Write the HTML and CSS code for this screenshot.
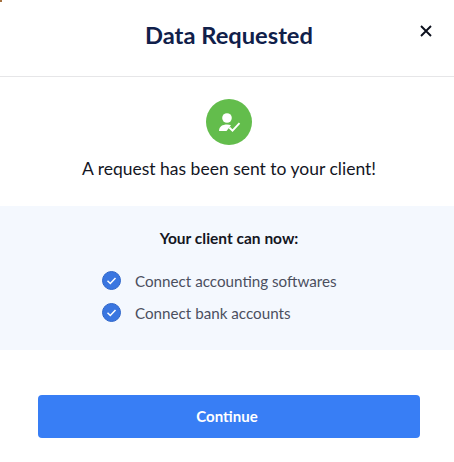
FILE: index.html
```html
<!DOCTYPE html>
<html lang="en">
<head>
<meta charset="utf-8">
<title>Data Requested</title>
<link rel="stylesheet" href="styles.css">
</head>
<body>
<main class="modal">
  <header class="modal-header">
    <h1 class="modal-title">Data Requested</h1>
    <button class="close-button" aria-label="Close">
      <svg width="12" height="12" viewBox="0 0 12 12"><path d="M1 1L11 11M11 1L1 11" stroke="#0b0f1c" stroke-width="1.9" fill="none"/></svg>
    </button>
  </header>
  <section class="status">
    <div class="status-icon">
      <svg width="26" height="24" viewBox="0 0 26 24">
        <circle cx="11" cy="8" r="4.800" fill="#fff"/>
        <path d="M3 21c0-4.500 3.500-6.500 8-6.500 1.500 0 2.800.2 4 .7L10.500 21z" fill="#fff"/>
        <path d="M13.300 17.500l3.200 3.200 7-7.500" fill="none" stroke="#fff" stroke-width="1.900"/>
      </svg>
    </div>
    <p class="status-text">A request has been sent to your client!</p>
  </section>
  <section class="panel">
    <h2 class="panel-title">Your client can now:</h2>
    <ul class="feature-list">
      <li class="feature">
        <svg class="check" width="19" height="19" viewBox="0 0 19 19"><circle cx="9.500" cy="9.500" r="9" fill="#3a76e0" stroke="#2f66c9" stroke-width="1"/><path d="M5.500 9.800l2.800 2.700 5.200-5.500" fill="none" stroke="#fff" stroke-width="1.500"/></svg>
        <span>Connect accounting softwares</span>
      </li>
      <li class="feature">
        <svg class="check" width="19" height="19" viewBox="0 0 19 19"><circle cx="9.500" cy="9.500" r="9" fill="#3a76e0" stroke="#2f66c9" stroke-width="1"/><path d="M5.500 9.800l2.800 2.700 5.200-5.500" fill="none" stroke="#fff" stroke-width="1.500"/></svg>
        <span>Connect bank accounts</span>
      </li>
    </ul>
  </section>
  <footer class="modal-footer">
    <button class="continue-button">Continue</button>
  </footer>
</main>
</body>
</html>
```
FILE: styles.css
```css
* { box-sizing: border-box; }
html, body { margin: 0; padding: 0; background: #fff; }
body { font-family: "Lato", "Noto Sans", sans-serif; width: 454px; height: 462px; overflow: hidden; }
.modal { position: relative; display: flex; flex-direction: column; width: 458px; }
.modal::before { content: ""; position: absolute; top: 0; left: 0; width: 2px; height: 2px; background: #a5713f; }
.modal-header { position: relative; height: 77px; border-bottom: 1px solid #e6e6e8; display: flex; justify-content: center; padding-top: 19px; }
.modal-title { margin: 0; font-size: 23.700px; line-height: 32px; font-weight: 700; color: #10204a; }
.close-button { position: absolute; top: 25px; right: 26px; width: 12px; height: 12px; padding: 0; border: 0; background: none; display: flex; }
.status { height: 129px; display: flex; flex-direction: column; align-items: center; padding-top: 22px; }
.status-icon { width: 46px; height: 46px; border-radius: 50%; background: #63bd4c; display: flex; align-items: center; justify-content: center; }
.status-text { margin: 13px 0 0; font-size: 17.500px; line-height: 22px; color: #14161f; }
.panel { height: 144px; background: #f4f8fe; padding-top: 22px; }
.panel-title { margin: 0; text-align: center; font-size: 15.500px; line-height: 20px; font-weight: 700; color: #14161f; }
.feature-list { list-style: none; margin: 21px 0 0; padding: 0 0 0 102px; display: flex; flex-direction: column; gap: 10px; }
.feature { display: flex; align-items: center; gap: 14px; height: 22px; font-size: 15.200px; color: #4b4f5e; }
.feature span { position: relative; top: 1px; }
.modal-footer { padding: 45px 38px 0; }
.continue-button { display: block; width: 382px; height: 43px; padding: 0 4px 2px 0; border: 0; border-radius: 4px; background: #387ef5; color: #fff; font-family: inherit; font-size: 15px; font-weight: 700; }
```
